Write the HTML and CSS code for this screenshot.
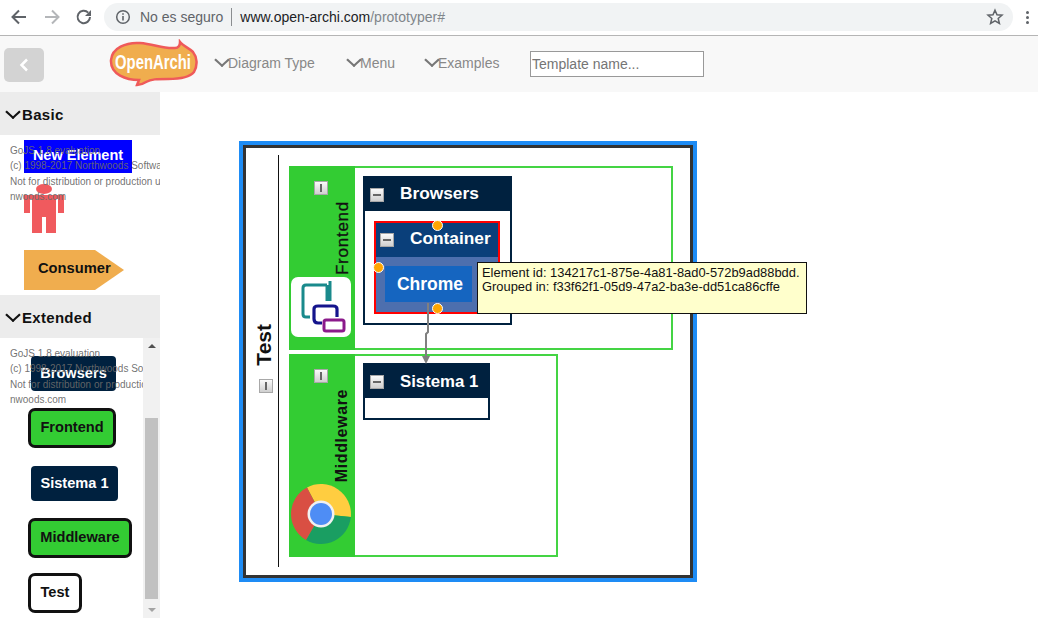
FILE: index.html
```html
<!DOCTYPE html>
<html lang="en">
<head>
    <meta charset="UTF-8">
    <title>OpenArchi Prototyper</title>
    <link rel="stylesheet" href="styles.css">
</head>
<body>
    <div class="browser-bar">
        <svg class="nav-icon" width="20" height="20" viewBox="0 0 20 20"><path d="M17 10H4M10 3.5L3.5 10l6.500 6.500" fill="none" stroke="#5f6368" stroke-width="2"/></svg>
        <svg class="nav-icon" width="20" height="20" viewBox="0 0 20 20"><path d="M3 10h13M10 3.500l6.500 6.500-6.500 6.500" fill="none" stroke="#b4b6b9" stroke-width="2"/></svg>
        <svg class="nav-icon" width="20" height="20" viewBox="0 0 20 20"><path d="M16 10a6.200 6.200 0 1 1-1.800-4.400" fill="none" stroke="#5f6368" stroke-width="2"/><path d="M17 3v6h-6z" fill="#5f6368"/></svg>
        <div class="address">
            <svg width="16" height="16" viewBox="0 0 16 16"><circle cx="8" cy="8" r="6.300" fill="none" stroke="#5f6368" stroke-width="1.500"/><path d="M8 7v4.500M8 4.300v1.500" stroke="#5f6368" stroke-width="1.600"/></svg>
            <span class="not-secure">No es seguro</span>
            <span class="url"><b>www.open-archi.com</b>/prototyper#</span>
            <svg class="star" width="18" height="18" viewBox="0 0 18 18"><path d="M9 2.200l2 4.600 5 .4-3.800 3.300 1.200 4.900L9 12.800l-4.400 2.600 1.200-4.900L2 7.200l5-.4z" fill="none" stroke="#5f6368" stroke-width="1.500"/></svg>
        </div>
        <div class="dots"><i></i><i></i><i></i></div>
    </div>

    <div class="navbar">
        <div class="back-button">
            <svg width="12" height="16" viewBox="0 0 12 16"><path d="M9 2.500L3.500 8 9 13.500" fill="none" stroke="#fff" stroke-width="2.500"/></svg>
        </div>
        <svg class="logo" width="90" height="48" viewBox="0 0 90 48">
            <path d="M2 21C3 9 17 3 31 4c14 1 23 6 35 5 4 0 5-3 5-6 3 4 9 6 13 10 4 5 5 13 1 20-4 5-14 7-26 7-11 0-17 0-22 3-3 2-7 3-9 3l2-5C18 41 1 36 2 21z" fill="#f0ad4e" stroke="#ef5a5a" stroke-width="2.500"/>
            <text x="6" y="30" class="logo-text" textLength="76" lengthAdjust="spacingAndGlyphs">OpenArchi</text>
        </svg>
        <ul class="nav-menu">
            <li class="nav-diagram"><span class="caret"></span>Diagram Type</li>
            <li class="nav-menu-item"><span class="caret"></span>Menu</li>
            <li class="nav-examples"><span class="caret"></span>Examples</li>
        </ul>
        <input class="template-input" type="text" placeholder="Template name...">
    </div>

    <div class="main">
        <div class="sidebar">
            <h3 class="panel-title"><span class="caret dark"></span>Basic</h3>
            <div class="palette palette-basic">
                <div class="node-new">New Element</div>
                <svg class="person" width="40" height="50" viewBox="0 0 40 50">
                    <ellipse cx="20" cy="5" rx="8" ry="5" fill="#f05a5e"/>
                    <path d="M0 11h40v18h-6V15h-2v34H22V33h-4v16H8V15H6v14H0z" fill="#f05a5e"/>
                </svg>
                <svg class="consumer" width="100" height="40" viewBox="0 0 100 40"><path d="M0 0h71l29 20-29 20H0z" fill="#f0ad4e"/></svg>
                <div class="consumer-label">Consumer</div>
                <div class="watermark">GoJS 1.8 evaluation<br>(c) 1998-2017 Northwoods Software<br>Not for distribution or production use<br>nwoods.com</div>
            </div>
            <h3 class="panel-title"><span class="caret dark"></span>Extended</h3>
            <div class="palette palette-extended">
                <div class="pal-node dark-node pal-browsers">Browsers</div>
                <div class="pal-node green-node pal-frontend">Frontend</div>
                <div class="pal-node dark-node pal-sistema">Sistema 1</div>
                <div class="pal-node green-node pal-middleware">Middleware</div>
                <div class="pal-node white-node pal-test">Test</div>
                <div class="watermark">GoJS 1.8 evaluation<br>(c) 1998-2017 Northwoods Software<br>Not for distribution or production use<br>nwoods.com</div>
                <div class="scrollbar">
                    <span class="arrow-up"></span>
                    <span class="thumb"></span>
                    <span class="arrow-down"></span>
                </div>
            </div>
        </div>

        <div class="workspace">
            <div class="stage">
                <div class="pool-line"></div>
                <div class="pool-title">Test</div>
                <span class="toggle toggle-pool"></span>

                <div class="lane lane-frontend">
                    <div class="lane-head">
                        <span class="toggle toggle-lane"></span>
                        <span class="lane-label label-frontend">Frontend</span>
                        <div class="device-icon">
                            <svg width="60" height="60" viewBox="0 0 60 60">
                                <path d="M36 8H15q-3 0-3 3v26q0 3 3 3h4M36 8v16M39 4v20" fill="none" stroke="#1a8a8c" stroke-width="3"/>
                                <path d="M31 46h-4q-4 0-4-4V32q0-3 4-3h15q4 0 4 3v8" fill="none" stroke="#14148c" stroke-width="3.200"/>
                                <rect x="33" y="43" width="20" height="11" rx="2" fill="#fff" stroke="#8b1a8b" stroke-width="3"/>
                            </svg>
                        </div>
                    </div>
                </div>

                <div class="lane lane-middleware">
                    <div class="lane-head">
                        <span class="toggle toggle-lane"></span>
                        <span class="lane-label label-middleware">Middleware</span>
                        <svg class="chrome-icon" width="60" height="60" viewBox="0 0 60 60">
                            <path d="M30 30L16 3.500A30 30 0 0 1 59.800 33z" fill="#ffcd40"/>
                            <path d="M30 30L59.800 33A30 30 0 0 1 15 56z" fill="#1a9e62"/>
                            <path d="M30 30L15 56A30 30 0 0 1 16 3.500z" fill="#d94f43"/>
                            <circle cx="30" cy="30" r="13.500" fill="#f1f1f1"/>
                            <circle cx="30" cy="30" r="11" fill="#4e8df5"/>
                        </svg>
                    </div>
                </div>

                <div class="group group-browsers">
                    <div class="group-head"><span class="toggle minus"></span><span class="group-name">Browsers</span></div>
                    <div class="group-body"></div>
                </div>
                <div class="group group-sistema">
                    <div class="group-head"><span class="toggle minus"></span><span class="group-name">Sistema 1</span></div>
                    <div class="group-body"></div>
                </div>
                <div class="container-node">
                    <div class="container-head"><span class="toggle minus"></span><span class="group-name">Container</span></div>
                    <div class="container-body"><div class="chrome-node">Chrome</div></div>
                </div>
                <svg class="link" width="20" height="70" viewBox="0 0 20 70">
                    <path d="M12 0v29l-2 2v25" fill="none" stroke="#808080" stroke-width="2"/>
                    <path d="M6 53h8l-4 8z" fill="#808080"/>
                </svg>
                <span class="handle handle-top"></span>
                <span class="handle handle-left"></span>
                <span class="handle handle-bottom"></span>
                <div class="tooltip">Element id: 134217c1-875e-4a81-8ad0-572b9ad88bdd.<br>Grouped in: f33f62f1-05d9-47a2-ba3e-dd51ca86cffe</div>
            </div>
        </div>
    </div>
</body>
</html>
```

FILE: styles.css
```css
* {
    box-sizing: border-box;
}

body {
    margin: 0;
    width: 1038px;
    height: 644px;
    overflow: hidden;
    background-color: #fff;
    font-family: "Liberation Sans", Arial, sans-serif;
}

/* browser chrome */
.browser-bar {
    height: 36px;
    display: flex;
    align-items: center;
    padding: 0 6px 1px 9px;
    border-bottom: 1px solid #b5b5b5;
}

.nav-icon {
    margin-right: 12.500px;
    flex: none;
}

.address {
    width: 909px;
    height: 28px;
    margin-left: -2.500px;
    display: flex;
    align-items: center;
    padding: 0 9px 0 11px;
    border-radius: 14px;
    background-color: #f1f3f4;
    font-size: 14px;
}

.not-secure {
    margin-left: 9px;
    padding-right: 8px;
    border-right: 1px solid #8a8d90;
    line-height: 18px;
    color: #5f6368;
}

.url {
    margin-left: 8px;
    flex: 1;
    color: #80868b;
}

.url b {
    font-weight: normal;
    color: #202124;
}

.dots {
    margin-left: 13px;
    display: flex;
    flex-direction: column;
    gap: 2px;
}

.dots i {
    width: 3px;
    height: 3px;
    border-radius: 50%;
    background-color: #5f6368;
}

/* app navbar */
.navbar {
    height: 56px;
    display: flex;
    align-items: center;
    background-color: #f8f8f8;
    position: relative;
}

.back-button {
    width: 40px;
    height: 34px;
    margin: 1px 0 0 4px;
    display: flex;
    align-items: center;
    justify-content: center;
    border-radius: 5px;
    background-color: #d3d3d3;
}

.logo {
    margin: -3px 0 0 65px;
    flex: none;
}

.logo-text {
    font-size: 20px;
    font-weight: bold;
    fill: #fff;
}

.nav-menu {
    list-style: none;
    margin: 0 0 0 16px;
    padding: 0;
    display: flex;
    font-size: 14px;
    color: #888;
    width: 315px;
}

.nav-menu li {
    display: flex;
    align-items: center;
    margin-top: -3px;
}

.nav-diagram {
    width: 132px;
}

.nav-menu-item {
    width: 78px;
}

.caret {
    width: 10px;
    height: 10px;
    margin: -5px 1px 0 2px;
    border-right: 2px solid #777;
    border-bottom: 2px solid #777;
    transform: scaleX(1.100) rotate(45deg);
    flex: none;
}

.caret.dark {
    border-color: #111;
    margin: -5px 4px 0 2px;
}

.template-input {
    width: 174px;
    height: 26px;
    margin: 0;
    padding: 0 1px;
    border: 1px solid #999;
    border-radius: 0;
    background-color: #fff;
    font-family: "Liberation Sans", Arial, sans-serif;
    font-size: 14px;
}

.template-input::placeholder {
    color: #757575;
}

/* left palettes */
.main {
    display: flex;
}

.sidebar {
    width: 160px;
    flex: none;
}

.panel-title {
    height: 43px;
    margin: 0;
    padding: 2px 0 0 6px;
    display: flex;
    align-items: center;
    background-color: #ececec;
    font-size: 15px;
    letter-spacing: 0.300px;
    color: #111;
}

.palette {
    position: relative;
    overflow: hidden;
}

.palette-basic {
    height: 160px;
}

.palette-extended {
    height: 280px;
}

.watermark {
    position: absolute;
    left: 10px;
    top: 8px;
    white-space: nowrap;
    font-size: 10px;
    line-height: 15.300px;
    color: rgba(105, 105, 105, 0.95);
}

.palette-extended .watermark {
    width: 133px;
    top: 8px;
    overflow: hidden;
}

.node-new {
    position: absolute;
    left: 24px;
    top: 5px;
    width: 108px;
    height: 33px;
    background-color: #0000ff;
    color: #fff;
    font-size: 14.500px;
    font-weight: bold;
    text-align: center;
    line-height: 30px;
}

.person {
    position: absolute;
    left: 24px;
    top: 49px;
}

.consumer {
    position: absolute;
    left: 24px;
    top: 115px;
}

.consumer-label {
    position: absolute;
    left: 38px;
    top: 125px;
    font-size: 14.700px;
    font-weight: bold;
    color: #111;
}

.pal-node {
    position: absolute;
    padding-bottom: 2px;
    font-size: 14.600px;
    font-weight: bold;
    display: flex;
    align-items: center;
    justify-content: center;
}

.dark-node {
    background-color: #00213f;
    color: #fff;
    border-radius: 4px;
}

.green-node {
    background-color: #33cc33;
    color: #111;
    border: 3px solid #111;
    border-radius: 7px;
}

.white-node {
    background-color: #fff;
    color: #111;
    border: 3px solid #111;
    border-radius: 7px;
}

.pal-browsers {
    left: 31px;
    top: 18px;
    width: 85px;
    height: 35px;
}

.pal-frontend {
    left: 28px;
    top: 70px;
    width: 88px;
    height: 40px;
}

.pal-sistema {
    left: 31px;
    top: 128px;
    width: 87px;
    height: 35px;
}

.pal-middleware {
    left: 28px;
    top: 180px;
    width: 104px;
    height: 40px;
}

.pal-test {
    left: 28px;
    top: 235px;
    width: 54px;
    height: 40px;
}

.scrollbar {
    position: absolute;
    right: 0;
    top: 0;
    width: 17px;
    height: 280px;
    background-color: #f1f1f1;
}

.thumb {
    position: absolute;
    left: 2px;
    top: 80px;
    width: 13px;
    height: 181px;
    background-color: #c1c1c1;
}

.arrow-up,
.arrow-down {
    position: absolute;
    left: 5px;
    border-left: 4px solid transparent;
    border-right: 4px solid transparent;
}

.arrow-up {
    top: 6px;
    border-bottom: 4px solid #505050;
}

.arrow-down {
    bottom: 6px;
    border-top: 4px solid #a3a3a3;
}

/* diagram */
.workspace {
    flex: 1;
    padding: 49px 0 0 79px;
}

.stage {
    position: relative;
    width: 458px;
    height: 441px;
    border: 4px solid #1e8cf5;
    outline: 3px solid #333;
    outline-offset: -7px;
    background-color: #fff;
}

.pool-line {
    position: absolute;
    left: 35px;
    top: 10px;
    width: 1px;
    height: 412px;
    background-color: #111;
}

.pool-title {
    position: absolute;
    left: 9px;
    top: 179px;
    writing-mode: vertical-rl;
    transform: rotate(180deg);
    font-size: 21px;
    font-weight: bold;
    color: #111;
}

.toggle {
    position: absolute;
    width: 14px;
    height: 14px;
    border: 1px solid #a8a8a8;
    background: linear-gradient(#fafafa, #cfcfcf);
}

.toggle::after {
    content: "";
    position: absolute;
    left: 5px;
    top: 2px;
    width: 2px;
    height: 8px;
    background-color: #666;
}

.toggle.minus::after {
    left: 2px;
    top: 5px;
    width: 8px;
    height: 2px;
}

.toggle-pool {
    left: 16px;
    top: 234px;
}

.lane {
    position: absolute;
    left: 46px;
    border: 2px solid #44d444;
    background-color: #fff;
}

.lane-frontend {
    top: 21px;
    width: 384px;
    height: 184px;
}

.lane-middleware {
    top: 209px;
    width: 269px;
    height: 203px;
}

.lane-head {
    position: relative;
    width: 66px;
    margin: -2px 0 0 -2px;
    height: calc(100% + 4px);
    background-color: #33cc33;
}

.toggle-lane {
    left: 25px;
    top: 15px;
}

.lane-label {
    position: absolute;
    left: 44px;
    writing-mode: vertical-rl;
    transform: rotate(180deg);
    font-size: 17px;
    color: #111;
}

.label-frontend {
    top: 35px;
    letter-spacing: 0.750px;
    -webkit-text-stroke: 0.300px #111;
}

.label-middleware {
    top: 35px;
    font-size: 16px;
    font-weight: bold;
    letter-spacing: 0.600px;
}

.device-icon {
    position: absolute;
    left: 2px;
    top: 111px;
    width: 60px;
    height: 60px;
    border-radius: 7px;
    background-color: #fff;
}

.chrome-icon {
    position: absolute;
    left: 2px;
    top: 130px;
}

.group {
    position: absolute;
    border: 2px solid #00213f;
    background-color: #00213f;
}

.group-browsers {
    left: 120px;
    top: 31px;
    width: 149px;
    height: 149px;
}

.group-sistema {
    left: 120px;
    top: 218px;
    width: 127px;
    height: 57px;
}

.group-head {
    position: relative;
    height: 33px;
}

.group-head .toggle {
    left: 5px;
    top: 10px;
}

.group-name {
    position: absolute;
    left: 35px;
    top: 5px;
    color: #fff;
    font-size: 17.300px;
    font-weight: bold;
    white-space: nowrap;
}

.group-sistema .group-name {
    left: 35px;
    font-size: 16.800px;
    top: 7px;
}

.group-body {
    height: calc(100% - 33px);
    background-color: #fff;
}

.container-node {
    position: absolute;
    left: 131px;
    top: 76px;
    width: 126px;
    height: 93px;
    border: 2px solid #ff0000;
}

.container-head {
    position: relative;
    height: 34px;
    background-color: #0a3f7a;
}

.container-head .toggle {
    left: 4px;
    top: 10px;
}

.container-head .group-name {
    left: 34px;
    top: 5px;
}

.container-body {
    height: 55px;
    padding: 9px 0 0 9px;
    background-color: #4d6fae;
}

.chrome-node {
    width: 87px;
    height: 36px;
    padding-left: 3px;
    background-color: #1565c0;
    color: #fff;
    font-size: 17.500px;
    font-weight: bold;
    text-align: center;
    line-height: 36px;
}

.link {
    position: absolute;
    left: 173px;
    top: 158px;
}

.handle {
    position: absolute;
    width: 11px;
    height: 11px;
    border: 1px solid #fff;
    border-radius: 50%;
    background-color: #ffa500;
}

.handle-top {
    left: 189px;
    top: 75px;
}

.handle-left {
    left: 130px;
    top: 117px;
}

.handle-bottom {
    left: 189px;
    top: 158px;
}

.tooltip {
    position: absolute;
    left: 234px;
    top: 117px;
    width: 330px;
    height: 52px;
    padding: 3px 4px;
    border: 1px solid #111;
    background-color: #ffffcc;
    font-size: 12.900px;
    line-height: 14px;
    color: #111;
    white-space: nowrap;
}
```
